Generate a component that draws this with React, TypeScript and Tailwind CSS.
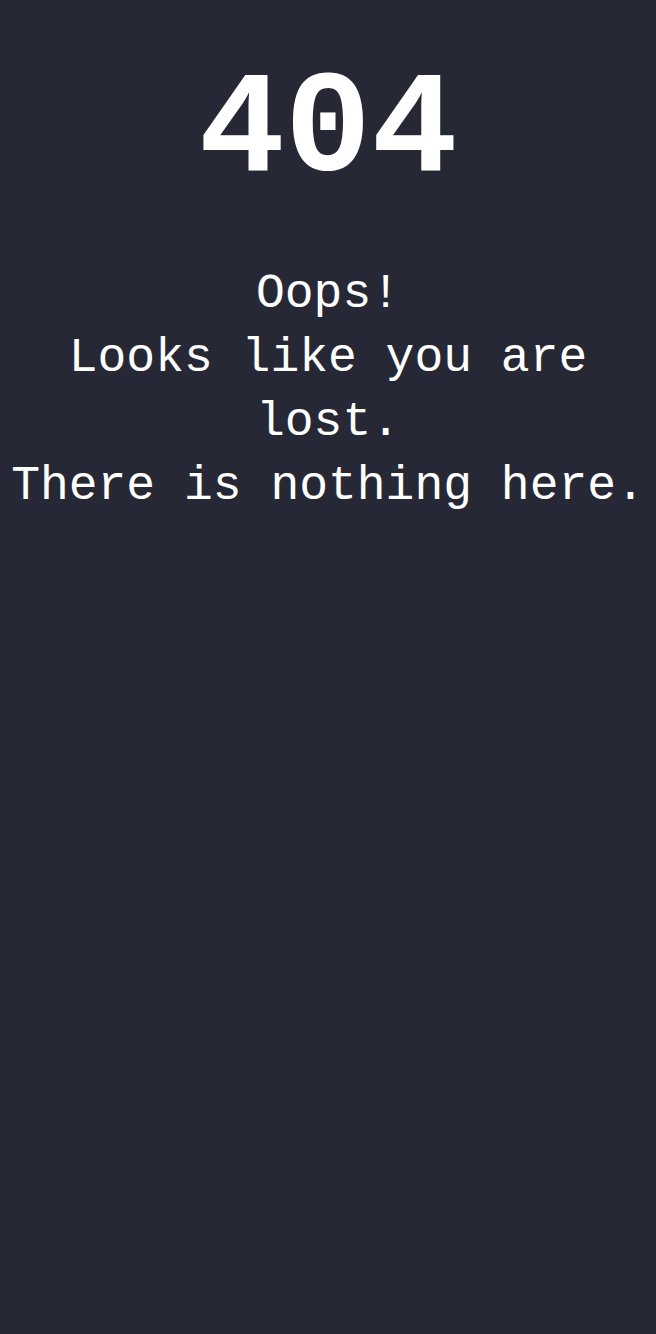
import React from 'react';

const App: React.FC = () => {
  return (
    <div className="min-h-screen w-full bg-[#262835] text-white flex flex-col items-center text-center font-['Liberation_Mono',monospace] pt-[60px]">
      <h1 className="text-[144px] leading-none font-bold">404</h1>
      <p className="mt-[58px] text-[48px] leading-[64px]">
        Oops!
        <br />
        Looks like you are lost.
        <br />
        There is nothing here.
      </p>
    </div>
  );
};

export default App;
